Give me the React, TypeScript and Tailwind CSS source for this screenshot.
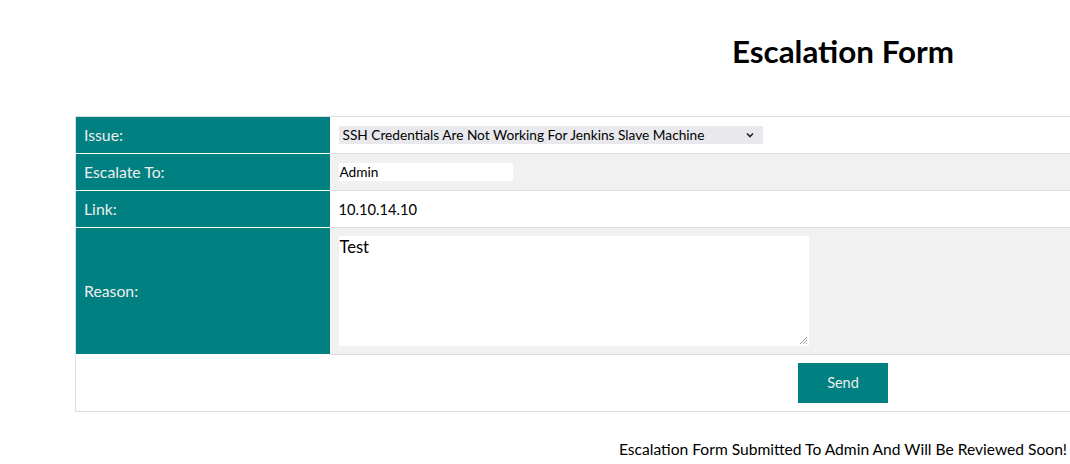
import React from "react";

const rowCls = "border-b border-[#dddddd]";
const labelCls =
  "w-[254px] bg-[#008080] text-[#eeeeee] text-[15.8px] px-[8px] border-b border-white align-middle";
const dataCls = "pl-[9px] pr-2";

export default function App() {
  return (
    <div className="w-[1070px] h-[464px] overflow-hidden bg-white">
      <div className="w-[1686px] font-['Lato',sans-serif] text-black">
        <h1 className="text-center text-[31.4px] font-bold pt-[33px] pb-[47px] leading-[36px]">
          Escalation Form
        </h1>
        <table className="mx-auto w-[1536px] border border-[#dddddd] border-collapse">
          <tbody>
            <tr className={rowCls}>
              <td className={`${labelCls} h-[37px]`}>Issue:</td>
              <td className={`${dataCls} bg-white`}>
                <div className="w-[424px] h-[18px] bg-[#e9e9ed] flex items-center justify-between pl-1 pr-2 text-[13.7px]">
                  <span>SSH Credentials Are Not Working For Jenkins Slave Machine</span>
                  <svg width="10" height="10" viewBox="0 0 10 10" fill="none" stroke="#222" strokeWidth="1.6">
                    <path d="M2 3.5 L5 6.5 L8 3.5" />
                  </svg>
                </div>
              </td>
            </tr>
            <tr className={rowCls}>
              <td className={`${labelCls} h-[37px]`}>Escalate To:</td>
              <td className={`${dataCls} bg-[#f1f1f1]`}>
                <div className="w-[174px] h-[18px] bg-white flex items-center px-[1px] text-[13.7px]">
                  Admin
                </div>
              </td>
            </tr>
            <tr className={rowCls}>
              <td className={`${labelCls} h-[37px]`}>Link:</td>
              <td className={`${dataCls} bg-white text-[14.7px]`}>10.10.14.10</td>
            </tr>
            <tr className={rowCls}>
              <td className={`${labelCls} h-[127px]`}>Reason:</td>
              <td className={`${dataCls} bg-[#f1f1f1]`}>
                <div className="relative w-[470px] h-[110px] bg-white text-[16.5px] px-[1px] leading-[22px]">
                  Test
                  <svg className="absolute right-[1px] bottom-[1px]" width="10" height="10" viewBox="0 0 10 10" stroke="#888" strokeWidth="0.8">
                    <path d="M9 2 L2 9 M9 5 L5 9 M9 8 L8 9" />
                  </svg>
                </div>
              </td>
            </tr>
            <tr className={rowCls}>
              <td colSpan={2} className="h-[57px] text-center bg-white">
                <button className="w-[90px] h-[40px] bg-[#008080] text-[#eeeeee] text-[14.5px]">
                  Send
                </button>
              </td>
            </tr>
          </tbody>
        </table>
        <p className="text-center text-[15.6px] mt-[26px]">
          Escalation Form Submitted To Admin And Will Be Reviewed Soon!
        </p>
      </div>
    </div>
  );
}
